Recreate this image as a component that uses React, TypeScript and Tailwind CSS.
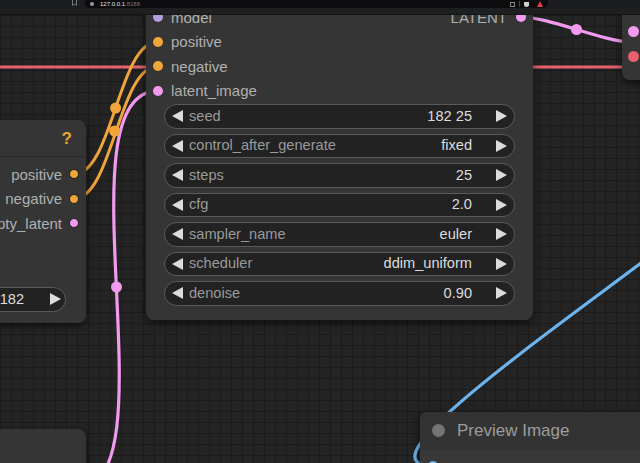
import React from "react";

const FONT = { fontFamily: '"Liberation Sans", Arial, Helvetica, sans-serif' };

function LeftArrow() {
  return (
    <svg width="11" height="12" viewBox="0 0 11 12" className="shrink-0">
      <path d="M0 6 L11 0 L11 12 Z" fill="#dcdcdc" />
    </svg>
  );
}

function RightArrow() {
  return (
    <svg width="11" height="12" viewBox="0 0 11 12" className="shrink-0">
      <path d="M11 6 L0 0 L0 12 Z" fill="#dcdcdc" />
    </svg>
  );
}

function Widget({ label, value }: { label?: string; value: string }) {
  return (
    <div className="flex h-[24.5px] items-center rounded-full border border-[#5a5a5a] bg-[#222222] pl-[7px] pr-[7px] text-[14.6px] leading-none">
      <LeftArrow />
      <span className="ml-[6px] flex-1 truncate text-[#9a9a9a]">{label}</span>
      <span className="text-[#dddddd]">{value}</span>
      <span className="ml-[24px] flex">
        <RightArrow />
      </span>
    </div>
  );
}

function Dot({ color }: { color: string }) {
  return (
    <span
      className="block h-[10px] w-[10px] shrink-0 rounded-full"
      style={{ backgroundColor: color }}
    />
  );
}

const ORANGE = "#f2a63a";
const PINK = "#f29af0";
const RED = "#e9606f";
const BLUE = "#6db4ec";
const LAV = "#b39ddb";

export default function App() {
  return (
    <div
      className="flex h-[463px] w-[640px] flex-col overflow-hidden bg-[#232323]"
      style={FONT}
    >
      {/* browser chrome */}
      <div className="flex h-[8px] shrink-0 items-stretch bg-[#1c1d20]">
        <div className="flex w-[85px] items-start justify-end pr-[8px]">
          <svg width="5" height="6" viewBox="0 0 5 6">
            <path d="M0.5 0 V5.5 L2.5 4 L4.5 5.5 V0" fill="none" stroke="#8a8a8a" strokeWidth="0.8" />
          </svg>
        </div>
        <div className="flex w-[463px] items-center rounded-b-[5px] bg-[#0c0c0f] pl-[5px] pr-[5px]">
          <span className="block h-[4px] w-[4px] rounded-full bg-[#9a9a9a]" />
          <span className="ml-[6px] text-[6px] leading-none text-[#e6e6e6]">
            127.0.0.1<span className="text-[#777]">:8188</span>
          </span>
          <span className="flex-1" />
          <span className="block h-[5px] w-[5px] border border-[#888]" />
          <span className="ml-[4px] block h-[6px] w-px bg-[#444]" />
          <span className="ml-[4px] block h-[5px] w-[5px] rounded-b-full bg-[#cfcfcf]" />
          <span className="ml-[8px] block h-0 w-0 border-x-[3px] border-b-[6px] border-x-transparent border-b-[#e0404a]" />
        </div>
        <div className="flex-1" />
      </div>
      <div className="h-[7px] shrink-0 border-b border-[#141414] bg-[#1e1f21]" />

      {/* canvas */}
      <div className="relative flex-1 overflow-hidden bg-[#242424] bg-[linear-gradient(to_right,#1b1b1b_1px,transparent_1px),linear-gradient(to_bottom,#1b1b1b_1px,transparent_1px)] bg-[size:11px_11px]">
        {/* links */}
        <svg
          className="absolute left-0 top-[-15px]"
          width="640"
          height="463"
          viewBox="0 0 640 463"
        >
          <path d="M-10 67 L640 67" stroke={RED} strokeWidth="3.2" fill="none" />
          <path d="M521 17 C549 17 604 42 632 42" stroke={PINK} strokeWidth="3.2" fill="none" />
          <path d="M73.5 174.3 C113 174.3 118 41.8 158 41.8" stroke={ORANGE} strokeWidth="3" fill="none" />
          <path d="M73.5 198.8 C113 198.8 118 66.3 158 66.3" stroke={ORANGE} strokeWidth="3" fill="none" />
          <path d="M75 490 C177 490 56 90.8 158 90.8" stroke={PINK} strokeWidth="3.2" fill="none" />
          <path d="M780 115 C902 115 305 466 433 466" stroke={BLUE} strokeWidth="3.2" fill="none" />
          <circle cx="115.6" cy="108" r="5.5" fill={ORANGE} />
          <circle cx="114.6" cy="131" r="5.5" fill={ORANGE} />
          <circle cx="116.5" cy="287" r="5.5" fill={PINK} />
          <circle cx="576.5" cy="29.5" r="5.5" fill={PINK} />
        </svg>

        {/* KSampler node */}
        <div className="absolute left-[146px] top-[-10px] flex w-[387px] flex-col rounded-b-[8px] bg-[#353535] pb-[14.5px] shadow-[0_3px_10px_rgba(0,0,0,0.55)]">
          <div className="flex flex-col text-[15px] leading-none text-[#b0b0b0]">
            <div className="flex h-[24.5px] items-center pl-[7px] pr-[7px]">
              <Dot color={LAV} />
              <span className="ml-[8px] flex-1">model</span>
              <span className="mr-[9px]">LATENT</span>
              <Dot color={PINK} />
            </div>
            <div className="flex h-[24.5px] items-center pl-[7px]">
              <Dot color={ORANGE} />
              <span className="ml-[8px]">positive</span>
            </div>
            <div className="flex h-[24.5px] items-center pl-[7px]">
              <Dot color={ORANGE} />
              <span className="ml-[8px]">negative</span>
            </div>
            <div className="flex h-[24.5px] items-center pl-[7px]">
              <Dot color={PINK} />
              <span className="ml-[8px]">latent_image</span>
            </div>
          </div>
          <div className="mt-[1px] flex flex-col gap-[5px] px-[18px]">
            <Widget label="seed" value="182 25" />
            <Widget label="control_after_generate" value="fixed" />
            <Widget label="steps" value="25" />
            <Widget label="cfg" value="2.0" />
            <Widget label="sampler_name" value="euler" />
            <Widget label="scheduler" value="ddim_uniform" />
            <Widget label="denoise" value="0.90" />
          </div>
        </div>

        {/* left node */}
        <div className="absolute left-[-120px] top-[105px] flex w-[206px] flex-col rounded-r-[8px] bg-[#353535] pb-[11.5px] shadow-[0_3px_10px_rgba(0,0,0,0.55)]">
          <div className="flex h-[37px] items-center justify-end border-b border-[#2a2a2a] pr-[14px]">
            <span className="text-[17px] font-bold leading-none text-[#e9a534]">?</span>
          </div>
          <div className="flex flex-col pt-[5px] text-[15px] leading-none text-[#b0b0b0]">
            <div className="flex h-[24.5px] items-center justify-end pr-[7.5px]">
              <span className="mr-[6.5px]">positive</span>
              <span className="block h-[10px] w-[10px] rounded-full border border-[#1c1c1c]" style={{ backgroundColor: ORANGE }} />
            </div>
            <div className="flex h-[24.5px] items-center justify-end pr-[7.5px]">
              <span className="mr-[6.5px]">negative</span>
              <span className="block h-[10px] w-[10px] rounded-full border border-[#1c1c1c]" style={{ backgroundColor: ORANGE }} />
            </div>
            <div className="flex h-[24.5px] items-center justify-end pr-[7.5px]">
              <span className="mr-[6.5px]">empty_latent</span>
              <span className="block h-[10px] w-[10px] rounded-full border border-[#1c1c1c]" style={{ backgroundColor: PINK }} />
            </div>
          </div>
          <div className="mt-[51.5px] px-[20px]">
            <div className="flex h-[24.5px] items-center rounded-full border border-[#5a5a5a] bg-[#222222] pl-[7px] pr-[7px] text-[14.6px] leading-none">
              <LeftArrow />
              <span className="ml-[6px] flex-1 text-[#9a9a9a]">noise_seed</span>
              <span className="text-[#dddddd]">182</span>
              <span className="ml-[26px] flex">
                <RightArrow />
              </span>
            </div>
          </div>
        </div>

        {/* bottom-left node */}
        <div className="absolute left-[-40px] top-[414px] h-[80px] w-[126px] rounded-tr-[8px] bg-[#353535] shadow-[0_3px_10px_rgba(0,0,0,0.55)]" />

        {/* top-right node */}
        <div className="absolute left-[622px] top-[-20px] flex h-[85px] w-[60px] flex-col rounded-bl-[8px] bg-[#353535] pl-[5.5px] shadow-[0_3px_10px_rgba(0,0,0,0.55)]">
          <div className="flex h-[24.5px] shrink-0 items-center" />
          <div className="flex h-[24.5px] shrink-0 items-center">
            <span className="block h-[11px] w-[11px] rounded-full" style={{ backgroundColor: PINK }} />
          </div>
          <div className="flex h-[24.5px] shrink-0 items-center">
            <span className="block h-[11px] w-[11px] rounded-full" style={{ backgroundColor: RED }} />
          </div>
        </div>

        {/* Preview Image node */}
        <div className="absolute left-[420px] top-[397px] flex h-[120px] w-[260px] flex-col rounded-tl-[8px] bg-[#383838] shadow-[0_3px_10px_rgba(0,0,0,0.55)]">
          <div className="flex h-[37px] items-center rounded-tl-[8px] bg-[#333333] pl-[12px]">
            <span className="block h-[13px] w-[13px] rounded-full bg-[#747474]" />
            <span className="ml-[12px] text-[17px] leading-none text-[#9c9c9c]">Preview Image</span>
          </div>
          <div className="flex pl-[8px] pt-[12px]">
            <span className="block h-[10px] w-[10px] rounded-full border-[2px] border-[#6db4ec] bg-[#2a2a2a]" />
          </div>
        </div>
      </div>
    </div>
  );
}
